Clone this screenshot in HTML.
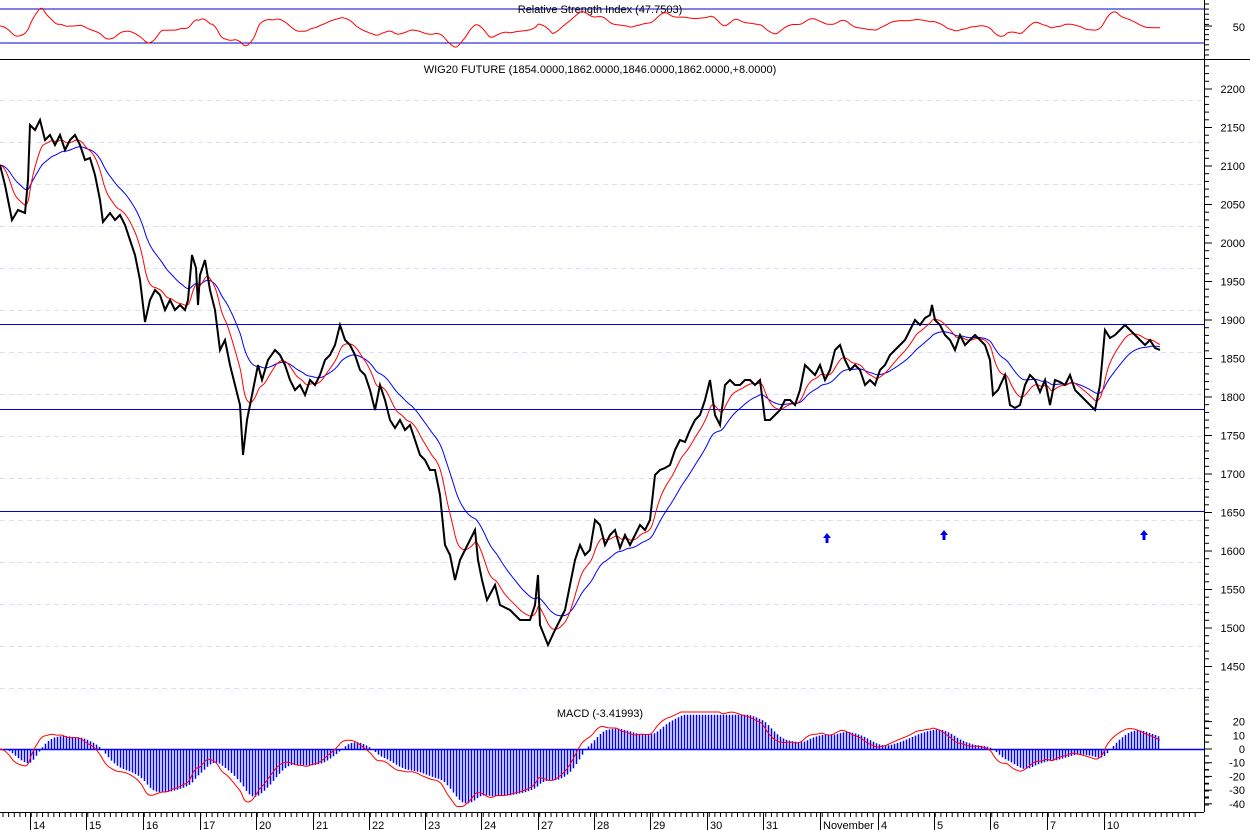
<!DOCTYPE html>
<html><head><meta charset="utf-8"><style>
html,body{margin:0;padding:0;background:#fff;width:1250px;height:830px;overflow:hidden}
svg text{font-family:"Liberation Sans",sans-serif;font-size:11px;fill:#000}
</style></head><body>
<svg id="s" width="1250" height="830" xmlns="http://www.w3.org/2000/svg">
<g id="grid"></g>
<line x1="0" y1="9" x2="1204" y2="9" stroke="#0000cc" stroke-width="1"/>
<line x1="0" y1="43" x2="1204" y2="43" stroke="#0000cc" stroke-width="1"/>
<line x1="0" y1="59.5" x2="1250" y2="59.5" stroke="#000" stroke-width="1"/>
<line x1="0" y1="324.5" x2="1204" y2="324.5" stroke="#0000dd" stroke-width="1"/>
<line x1="0" y1="409.5" x2="1204" y2="409.5" stroke="#0000dd" stroke-width="1"/>
<line x1="0" y1="511.5" x2="1204" y2="511.5" stroke="#0000dd" stroke-width="1"/>
<text x="600" y="13" text-anchor="middle">Relative Strength Index (47.7503)</text>
<text x="600" y="73" text-anchor="middle">WIG20 FUTURE (1854.0000,1862.0000,1846.0000,1862.0000,+8.0000)</text>
<text x="600" y="717" text-anchor="middle">MACD (-3.41993)</text>
<g id="plots"></g>
<line x1="1204.5" y1="0" x2="1204.5" y2="812" stroke="#000"/>
<line x1="0" y1="812.5" x2="1204" y2="812.5" stroke="#000"/>
<g id="axis"></g>
<g fill="#0000ee">
<path d="M827 533 l-4 5 h2.5 v5 h3 v-5 h2.5z"/>
<path d="M944 530 l-4 5 h2.5 v5 h3 v-5 h2.5z"/>
<path d="M1144 530 l-4 5 h2.5 v5 h3 v-5 h2.5z"/>
</g>
</svg>
<script>
var NS="http://www.w3.org/2000/svg";
function el(p,t,a,txt){var e=document.createElementNS(NS,t);for(var k in a)e.setAttribute(k,a[k]);if(txt!=null)e.textContent=txt;document.getElementById(p).appendChild(e);return e;}
for(var y=100;y<=690;y+=42)el("grid","line",{x1:0,y1:y+.5,x2:1204,y2:y+.5,stroke:"#dcdcf4","stroke-dasharray":"5,4"});
function py(p){return 89+(2200-p)*0.77;}
for(var p=2230;p>=1400;p-=10){var yy=py(p);if(yy<62||yy>700)continue;var maj=p%50==0;el("axis","line",{x1:1204,y1:yy,x2:maj?1212:1209,y2:yy,stroke:"#000"});if(maj)el("axis","text",{x:1245,y:yy+4,"text-anchor":"end"},String(p));}
el("axis","text",{x:1245,y:31,"text-anchor":"end"},"50");
for(var yy=4;yy<58;yy+=5.1)el("axis","line",{x1:1204,y1:yy,x2:1209,y2:yy,stroke:"#000"});
el("axis","line",{x1:1204,y1:26,x2:1212,y2:26,stroke:"#000"});
for(var m=-40;m<=20;m+=5){var yy=749-m*1.37;var maj=m%10==0;el("axis","line",{x1:1204,y1:yy,x2:maj?1212:1209,y2:yy,stroke:"#000"});if(maj)el("axis","text",{x:1245,y:yy+4,"text-anchor":"end"},String(m));}
for(var yy=700;yy<812;yy+=7)el("axis","line",{x1:1204,y1:yy,x2:1209,y2:yy,stroke:"#000"});
for(var x=3;x<1200;x+=5.65)el("axis","line",{x1:x,y1:812,x2:x,y2:817,stroke:"#000"});
var days=[["14",30],["15",86],["16",143],["17",200],["20",256],["21",313],["22",369],["23",425],["24",481],["27",538],["28",594],["29",650],["30",707],["31",763],["November",820],["4",878],["5",934],["6",990],["7",1047],["10",1104]];
days.forEach(function(d){el("axis","line",{x1:d[1]+.5,y1:812,x2:d[1]+.5,y2:830,stroke:"#000"});el("axis","text",{x:d[1]+3,y:829},d[0]);});
var P=[0,165,5,185,12,220,18,210,25,213,28,180,30,125,35,130,40,120,45,140,50,135,55,145,60,135,65,150,70,140,75,135,80,145,85,160,90,158,95,175,100,200,103,222,110,213,115,220,120,215,125,225,130,240,135,255,140,280,145,322,150,300,155,290,160,295,165,310,170,300,175,310,180,305,185,310,188,300,192,255,196,268,198,305,200,275,205,260,210,290,215,310,220,350,225,340,230,365,235,385,240,405,243,455,247,420,252,395,258,365,262,380,268,360,275,350,280,355,285,365,290,380,295,390,300,385,305,395,310,380,315,385,320,375,325,360,330,355,335,345,340,325,345,340,350,345,355,355,360,370,365,375,370,390,375,410,380,385,385,400,390,420,395,428,400,420,405,430,410,425,415,440,420,455,425,460,430,470,435,470,440,495,445,545,450,555,455,580,460,560,465,550,470,540,475,530,478,560,482,580,487,600,495,585,500,605,510,610,520,620,530,620,535,605,538,575,540,625,548,645,555,630,560,620,565,610,570,585,575,560,580,545,585,555,590,550,595,520,600,525,605,545,610,535,615,530,620,548,625,535,630,545,640,525,645,530,650,520,655,475,660,470,665,468,670,465,675,450,680,440,685,442,690,430,695,420,700,415,705,400,710,380,715,415,720,425,725,385,730,380,735,385,740,385,745,380,750,380,755,385,760,380,765,420,770,420,775,415,780,410,785,400,790,400,795,405,800,390,805,365,810,370,815,375,820,365,825,380,830,370,835,350,840,345,845,360,850,370,855,365,860,370,865,385,870,380,875,385,880,370,885,365,890,355,895,350,900,345,905,340,910,330,915,320,920,325,925,318,930,315,932,305,935,320,940,325,945,335,950,340,955,350,960,335,965,345,970,340,975,335,980,340,985,345,990,360,993,395,998,390,1005,375,1010,405,1015,408,1020,405,1025,385,1030,375,1035,380,1040,392,1045,380,1050,405,1055,380,1060,382,1065,385,1070,375,1075,390,1080,395,1085,400,1090,405,1095,410,1100,385,1105,330,1110,338,1115,335,1120,330,1125,325,1130,330,1135,335,1140,340,1145,345,1150,340,1155,348,1160,350];
var pts=[];for(var i=0;i<P.length;i+=2)pts.push([P[i],P[i+1]]);
var Y=[];var j=0;for(var x=0;x<=1160;x++){while(j<pts.length-2&&pts[j+1][0]<x)j++;var a=pts[j],b=pts[j+1];var t=(x-a[0])/(b[0]-a[0]);t=Math.max(0,Math.min(1,t));Y.push(a[1]+(b[1]-a[1])*t);}
function ema(arr,al,init){var o=[],v=init!=null?init:arr[0];for(var i=0;i<arr.length;i++){v=v+al*(arr[i]-v);o.push(v);}return o;}
var R=ema(Y,0.09),B=ema(Y,0.035);
function path(arr,fn){var d="";for(var i=0;i<arr.length;i++){d+=(i?"L":"M")+i+" "+fn(arr[i]).toFixed(1);}return d;}
el("plots","path",{d:path(B,function(v){return v}),stroke:"#0000ff",fill:"none","stroke-width":1});
el("plots","path",{d:path(R,function(v){return v}),stroke:"#ff0000",fill:"none","stroke-width":1});
el("plots","path",{d:path(Y,function(v){return v}),stroke:"#000",fill:"none","stroke-width":2});
var F=ema(Y,0.06),S=ema(Y,0.022);var M=[];for(var i=0;i<Y.length;i++)M.push((S[i]-F[i])*0.75);
var H=ema(M,0.12);
var d="";for(var x=0;x<=1160;x+=3){var h=Math.max(-40,Math.min(25,H[x]))*1.37;d+="M"+x+".5 749V"+(749-h).toFixed(1);}
el("plots","path",{d:d,stroke:"#0000ff","stroke-width":1.5,fill:"none"});
el("plots","line",{x1:0,y1:749.5,x2:1204,y2:749.5,stroke:"#0000ff","stroke-width":1.5});
el("plots","path",{d:path(M,function(v){return 749-Math.max(-42,Math.min(27,v))*1.37}),stroke:"#ff0000",fill:"none"});
var D=[];for(var i=0;i<Y.length;i++){var k=Math.max(0,i-14);D.push(Y[k]-Y[i]);}
var RS=ema(D,0.08);
el("plots","path",{d:path(RS,function(v){return Math.max(6,Math.min(52,26-v*0.35))}),stroke:"#ff0000",fill:"none"});
</script>
</body></html>
